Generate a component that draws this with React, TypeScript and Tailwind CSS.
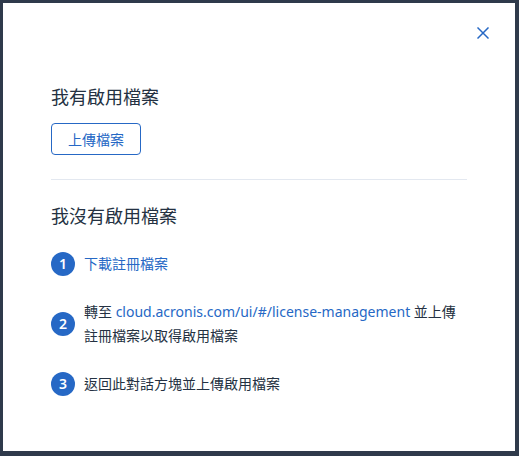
import React from "react";

const font = { fontFamily: '"Noto Sans", "Noto Sans CJK TC", sans-serif' };

function Step({ n, children }: { n: number; children: React.ReactNode }) {
  return (
    <div className="flex items-center gap-[9px]">
      <div className="flex h-[24px] w-[24px] shrink-0 items-center justify-center rounded-full bg-[#2668c5] text-[14px] font-semibold leading-none text-white">
        {n}
      </div>
      <div className="w-[384px] text-[14px] leading-[24px] text-[#243142]">{children}</div>
    </div>
  );
}

export default function App() {
  return (
    <div
      className="h-[456px] w-[519px] bg-[#2f3a4b] pl-[3px] pt-[3px]"
      style={font}
    >
      <div className="flex h-[448px] w-[512px] flex-col bg-white">
        <div className="flex h-[82px] justify-end pr-[26px] pt-[24px]">
          <svg width="12" height="12" viewBox="0 0 12 12" fill="none">
            <path
              d="M1 1L11 11M11 1L1 11"
              stroke="#2668c5"
              strokeWidth="1.5"
              strokeLinecap="square"
            />
          </svg>
        </div>
        <div className="flex flex-col px-[48px]">
          <div className="text-[18px] leading-[24px] text-[#243142]">
            我有啟用檔案
          </div>
          <button className="mt-[14px] flex h-[32px] w-[90px] items-center justify-center rounded-[4px] border border-[#2668c5] text-[14px] text-[#2668c5]">
            上傳檔案
          </button>
          <div className="mt-[24px] h-px w-full bg-[#e3e8f0]" />
          <div className="mt-[24px] text-[18px] leading-[24px] text-[#243142]">
            我沒有啟用檔案
          </div>
          <div className="mt-[24px] flex flex-col gap-[24px]">
            <Step n={1}>
              <span className="text-[#2668c5]">下載註冊檔案</span>
            </Step>
            <Step n={2}>
              轉至 <span className="text-[#2668c5]">cloud.acronis.com/ui/#/license-management</span> 並上傳註冊檔案以取得啟用檔案
            </Step>
            <Step n={3}>返回此對話方塊並上傳啟用檔案</Step>
          </div>
        </div>
      </div>
    </div>
  );
}
